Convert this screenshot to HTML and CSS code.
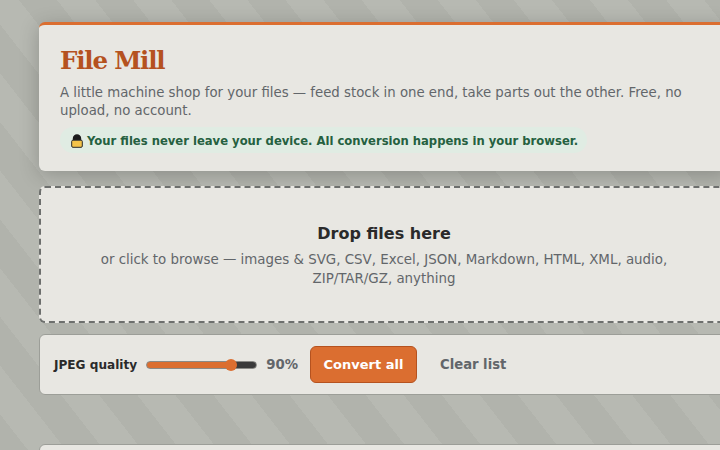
FILE: index.html
```html
<!DOCTYPE html>
<html>
  <head>
    <title>File Mill</title>
    <meta charset='UTF-8'>
    <link rel="stylesheet" href="styles.css">
  </head>
  <body>
    <main class='page'>
      <header class='card intro'>
        <h1>File Mill</h1>
        <p class='tagline'>A little machine shop for your files — feed stock in one end, take parts out the other. Free, no upload, no account.</p>
        <p class='privacy'>
          <svg class='lockIcon' viewBox='0 0 12 14' width='12' height='14'>
            <path d='M2.5 6.5V4.5a3.5 3.5 0 0 1 7 0v2' fill='#1c1c1c' stroke='#1c1c1c' stroke-width='1.4'/>
            <rect x='0.7' y='6.2' width='10.6' height='7.1' rx='1.2' fill='#f4c34a' stroke='#2a2a2a' stroke-width='1'/>
          </svg>
          Your files never leave your device. All conversion happens in your browser.
        </p>
      </header>

      <div class='dropzone'>
        <strong>Drop files here</strong>
        <span>or click to browse — images &amp; SVG, CSV, Excel, JSON, Markdown, HTML, XML, audio, ZIP/TAR/GZ, anything</span>
      </div>

      <div class='card controls'>
        <label for='quality'>JPEG quality</label>
        <input id='quality' type='range' min='50' max='100' value='90'>
        <span class='qualityValue'>90%</span>
        <button class='convertButton'>Convert all</button>
        <button class='clearButton'>Clear list</button>
      </div>

      <div class='card results'></div>
    </main>
  </body>
</html>
```

FILE: styles.css
```css
html, body {
  margin: 0;
  padding: 0;
  height: 100%;
  overflow: hidden;
}

body {
  font-family: "DejaVu Sans", sans-serif;
  color: #2a2a2a;
  background: repeating-linear-gradient(52deg, #b7b9b2 22px, #b7b9b2 52px, #b1b3ac 52px, #b1b3ac 82px);
}

.page {
  display: flex;
  flex-direction: column;
  width: 690px;
  margin-left: 39px;
  padding-top: 22px;
}

.card {
  background: #e8e7e2;
  border: 1px solid #9c9e98;
  border-radius: 6px;
}

.intro {
  padding: 19px 21px 18px;
  border: 0;
  border-top: 3px solid #db6e30;
  box-shadow: 0 4px 20px rgba(0, 0, 0, 0.22);
  margin-bottom: 15px;
}

h1 {
  margin: 0 0 6px;
  font-family: "DejaVu Serif", serif;
  font-size: 24.5px;
  letter-spacing: -1.2px;
  line-height: 34px;
  color: #b5521f;
}

.tagline {
  margin: 0 0 7px;
  font-size: 13.3px;
  line-height: 18px;
  color: #62666a;
}

.privacy {
  display: flex;
  align-items: center;
  gap: 4px;
  width: fit-content;
  margin: 0;
  padding: 5px 9px 3px 11px;
  height: 18px;
  border-radius: 13px;
  background: #e0ece3;
  color: #256040;
  font-size: 11.6px;
  font-weight: bold;
  line-height: 18px;
}

.lockIcon {
  flex: none;
}

.dropzone {
  display: flex;
  flex-direction: column;
  align-items: center;
  gap: 5px;
  box-sizing: border-box;
  height: 137px;
  justify-content: center;
  padding: 2px 40px 0;
  background: #e8e7e2;
  border: 2px dashed #6d6f6d;
  border-radius: 6px;
  text-align: center;
  font-size: 13.4px;
  line-height: 19px;
  color: #62666a;
  margin-bottom: 11px;
}

.dropzone strong {
  font-size: 16px;
  line-height: 22px;
  color: #2a2a2a;
}

.controls {
  display: flex;
  align-items: center;
  gap: 9px;
  height: 59px;
  padding: 0 14px;
  margin-bottom: 49px;
}

.controls label {
  font-size: 12.1px;
  font-weight: bold;
}

#quality {
  -webkit-appearance: none;
  appearance: none;
  width: 111px;
  height: 14px;
  margin: 0;
  background: transparent;
}

#quality::-webkit-slider-runnable-track {
  box-sizing: border-box;
  height: 8px;
  border: 1px solid #8a8a86;
  border-radius: 4px;
  background: linear-gradient(to right, #db6e30 77%, #3a3a3a 77%);
}

#quality::-webkit-slider-thumb {
  -webkit-appearance: none;
  width: 12px;
  height: 12px;
  margin-top: -3px;
  border-radius: 50%;
  background: #db6e30;
}

.qualityValue {
  font-size: 13.3px;
  font-weight: bold;
  color: #62666a;
}

button {
  font-family: inherit;
  font-size: 13px;
  font-weight: bold;
  border-radius: 6px;
}

.convertButton {
  height: 37px;
  width: 107px;
  margin-left: 3px;
  background: #db6e30;
  border: 1px solid #b5521f;
  color: #fff;
}

.clearButton {
  height: 37px;
  padding: 0 14px;
  background: transparent;
  border: 0;
  color: #62666a;
  font-size: 13.2px;
}

.results {
  height: 100px;
}
```
